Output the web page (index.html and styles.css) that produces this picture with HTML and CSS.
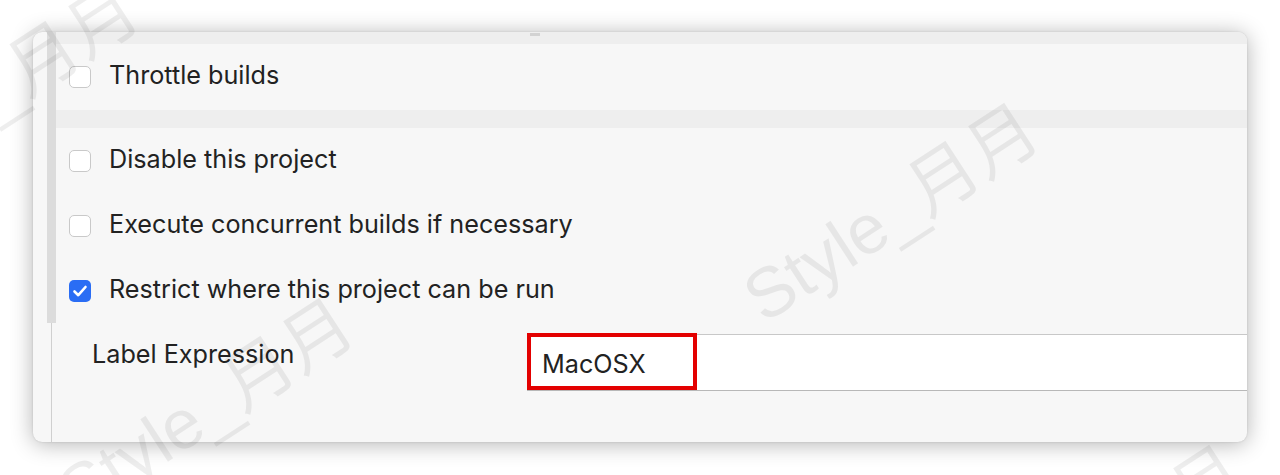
FILE: index.html
```html
<!DOCTYPE html>
<html lang="en">
<head>
<meta charset="utf-8">
<title>Job configuration</title>
<link rel="stylesheet" href="styles.css">
</head>
<body>
<div class="card">
  <div class="gutter">
    <div class="gutter-bar"></div>
    <div class="gutter-line"></div>
  </div>
  <div class="content">
    <div class="top-strip"><span class="handle"></span></div>
    <label class="row row-first">
      <span class="cb"></span>
      <span class="text">Throttle builds</span>
    </label>
    <div class="sep"></div>
    <label class="row">
      <span class="cb"></span>
      <span class="text">Disable this project</span>
    </label>
    <label class="row">
      <span class="cb"></span>
      <span class="text">Execute concurrent builds if necessary</span>
    </label>
    <label class="row">
      <span class="cb checked">
        <svg viewBox="0 0 22 22" width="22" height="22"><path d="M5.5 11.5 L9.3 15.2 L16.5 7" fill="none" stroke="#fff" stroke-width="2.6" stroke-linecap="round" stroke-linejoin="round"/></svg>
      </span>
      <span class="text">Restrict where this project can be run</span>
    </label>
    <div class="field">
      <div class="field-label">Label Expression</div>
      <div class="field-input">
        <span class="value">MacOSX</span>
        <span class="highlight"></span>
      </div>
    </div>
  </div>
</div>
<div class="wm wm-center">Style_月月</div>
<div class="wm wm-bl">Style_月月</div>
<div class="wm wm-tl">Style_月月</div>
<div class="wm wm-br">Style_月月</div>
</body>
</html>
```

FILE: styles.css
```css
html, body {
  margin: 0;
  padding: 0;
  background: #ffffff;
  overflow: hidden;
}
body {
  width: 1280px;
  height: 475px;
  position: relative;
  font-family: "Inter", "Noto Sans", "Noto Sans CJK SC", sans-serif;
  color: #222;
}
.card {
  position: relative;
  margin: 32px 0 0 33px;
  width: 1214px;
  height: 410px;
  background: #f7f7f7;
  border-radius: 9px;
  box-shadow: 0 2px 22px rgba(0,0,0,0.3), 0 0 2px rgba(0,0,0,0.15);
  display: flex;
  overflow: hidden;
}
.gutter {
  width: 9px;
  margin-left: 14px;
  display: flex;
  flex-direction: column;
  align-items: flex-start;
  flex: none;
}
.gutter-bar {
  width: 9px;
  height: 291px;
  background: #dcdcdc;
}
.gutter-line {
  width: 1px;
  margin-left: 4px;
  flex: 1;
  background: #d0d0d0;
}
.content {
  flex: 1;
  display: flex;
  flex-direction: column;
}
.top-strip {
  height: 12px;
  background: #eeeeee;
  position: relative;
}
.handle {
  position: absolute;
  left: 474px;
  top: 1px;
  width: 10px;
  height: 3px;
  background: #d2d2d2;
}
.row {
  height: 65px;
  display: flex;
  align-items: center;
  padding-left: 13px;
  gap: 18px;
}
.row-first {
  height: 66px;
}
.sep {
  height: 18px;
  background: #eeeeee;
}
.cb {
  width: 20px;
  height: 20px;
  border: 1px solid #c9c9c9;
  border-radius: 5px;
  background: #ffffff;
  flex: none;
  display: flex;
}
.cb.checked {
  width: 22px;
  height: 22px;
  border: none;
  background: #2a6df4;
}
.text {
  font-size: 25.2px;
  line-height: 1;
  color: #222;
  position: relative;
  top: -1px;
}
.field {
  display: flex;
  padding-top: 11px;
}
.field-label {
  width: 435px;
  padding-left: 36px;
  padding-top: 5px;
  font-size: 25.2px;
  line-height: 1.2;
  color: #222;
}
.field-input {
  position: relative;
  flex: 1;
  height: 55px;
  background: #ffffff;
  border-top: 1px solid #c8c8c8;
  border-bottom: 1px solid #b8b8b8;
  display: flex;
  align-items: center;
  padding-left: 15px;
}
.value {
  font-size: 25.2px;
  line-height: 1;
  color: #222;
  padding-top: 4px;
}
.highlight {
  position: absolute;
  left: 0;
  top: -2px;
  width: 162px;
  height: 49px;
  border: 4px solid #e30000;
}
.wm {
  position: absolute;
  font-family: "Liberation Sans", "Noto Sans CJK SC", sans-serif;
  font-size: 70px;
  color: rgba(0,0,0,0.065);
  white-space: nowrap;
  transform: rotate(-33deg);
  transform-origin: left bottom;
  pointer-events: none;
}
.wm-center { left: 775px; top: 240px; }
.wm-bl { left: 90px; top: 435px; }
.wm-tl { left: -125px; top: 120px; }
.wm-br { left: 980px; top: 582px; }
```
